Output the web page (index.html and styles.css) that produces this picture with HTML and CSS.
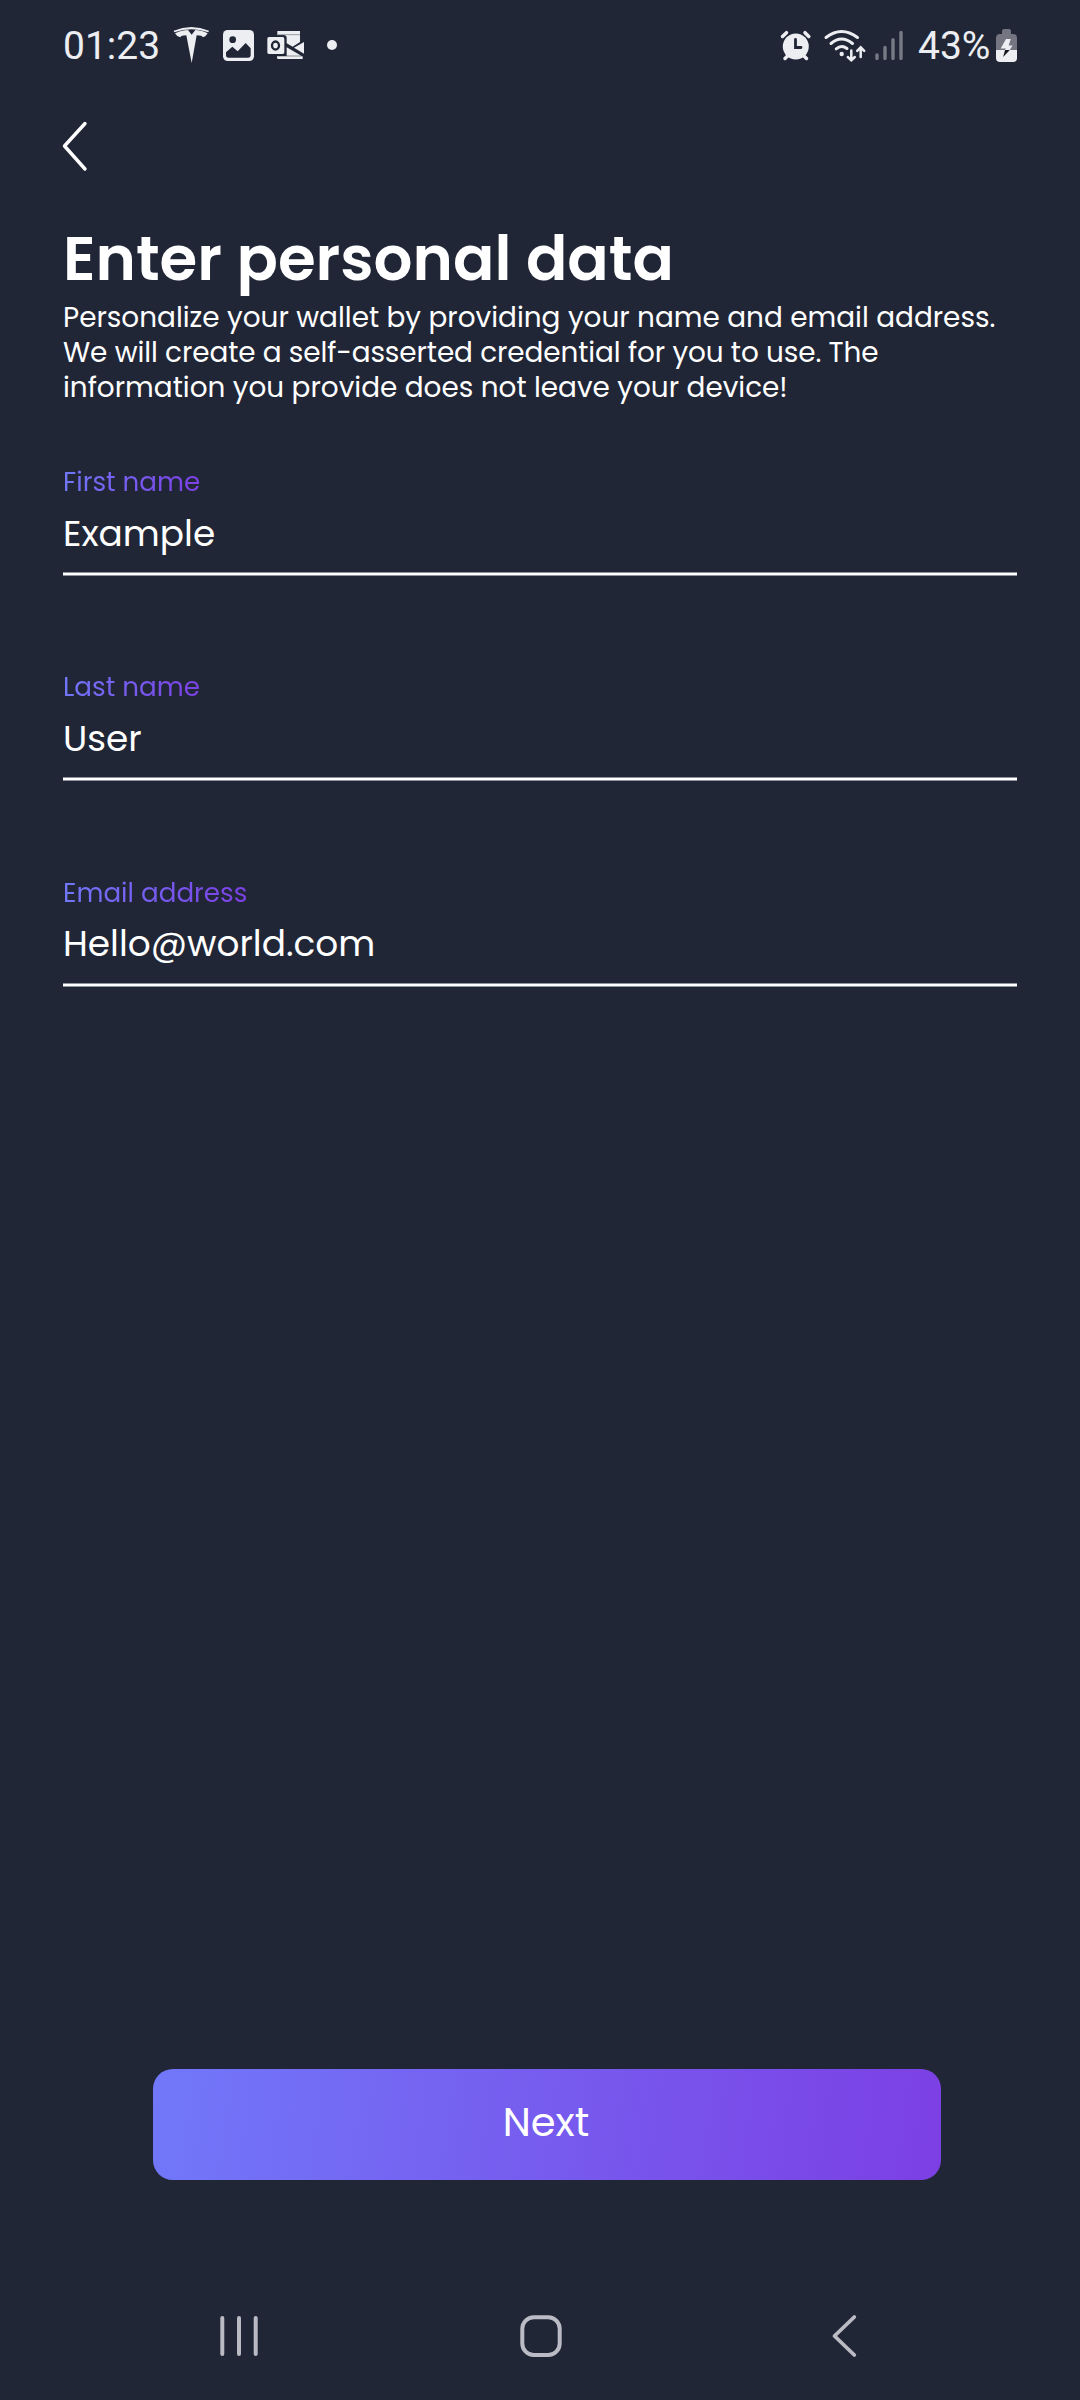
FILE: index.html
```html
<!DOCTYPE html>
<html lang="en">
<head>
<meta charset="utf-8">
<title>Enter personal data</title>
<link rel="stylesheet" href="styles.css">
</head>
<body>
<div class="screen">
  <header class="status">
    <span class="clock">01:23</span>
    <svg width="44" height="50" viewBox="0 0 132 150" fill="#eceef2">
      <path d="M11 32Q64 10 117 32L115 37Q64 19 13 37Z"/>
      <path d="M15 40Q38 30 54 30L65 44L76 30Q92 30 113 40Q108 50 99 52Q97 46 80 46L65 129L49 46Q32 46 31 52Q20 50 15 40Z"/>
    </svg>
    <svg width="48" height="50" viewBox="132 0 144 150" fill="#eceef2">
      <rect x="159" y="30" width="93" height="93" rx="14"/>
      <circle cx="188" cy="59" r="10" fill="#212637"/>
      <path d="M168 97L187 80L203 94L227 69L242 85V105Q242 113 234 113H176Q168 113 168 105Z" fill="#212637"/>
    </svg>
    <svg width="48" height="50" viewBox="276 0 144 150" fill="#eceef2">
      <path d="M322 33H390V66L368 80L350 70V54Q350 45 341 45H322Z"/>
      <path d="M322 44H390" stroke="#9a9ca8" stroke-width="3"/>
      <rect x="292" y="51" width="51" height="51" rx="5"/>
      <ellipse cx="316.500" cy="76.500" rx="10.500" ry="12" fill="none" stroke="#212637" stroke-width="7"/>
      <path d="M402 66V101L372 83ZM350 82L394 107H350ZM321 109H398V117H325Q321 117 321 113Z"/>
    </svg>
    <svg width="40" height="50" viewBox="420 0 120 150"><circle cx="486" cy="75" r="15" fill="#eceef2"/></svg>
    <div class="system">
      <svg width="45" height="50" viewBox="770 20 45 50" fill="none" stroke="#eceef2" stroke-width="3.500" stroke-linecap="round">
        <circle cx="795.800" cy="46.500" r="13" fill="#eceef2" stroke="none"/>
        <path d="M782.500 36.500L786.500 32.700M808.800 36.500L805 32.700M785 58.500L788 55.500M806.500 58.500L803.500 55.500"/>
        <path d="M795.500 39.500V47.500H801" stroke="#212637" stroke-width="2.800"/>
      </svg>
      <svg width="55" height="50" viewBox="815 20 55 50" fill="none" stroke="#eceef2" stroke-width="3" stroke-linecap="round">
        <path d="M826 37.500Q841.500 25.500 857.500 37.500M831 43.500Q841.500 34.500 852.500 43.500M836.200 48.800Q841.500 44.500 847 48.500"/>
        <circle cx="841.700" cy="54" r="2.200" fill="#eceef2" stroke="none"/>
        <path d="M851.300 50.500V60M847.800 57L851.300 60.300L854.800 57M860.700 57V47.500M857.200 50.800L860.700 47.300L864.200 50.800" stroke-width="2.500"/>
      </svg>
      <svg width="40" height="50" viewBox="870 20 40 50" stroke="#777985" stroke-width="3.400" stroke-linecap="round">
        <path d="M877 55V58.500M885 47.500V58.500M893 39.700V58.500M901 32.500V58.500"/>
      </svg>
      <span class="percent">43%</span>
      <svg width="27" height="50" viewBox="993 20 27 50">
        <path d="M1002 34V31Q1002 29 1004 29H1009Q1011 29 1011 31V34H1013Q1017 34 1017 38V50H996V38Q996 34 1000 34Z" fill="#747581"/>
        <path d="M996 50H1017V58Q1017 62 1013 62H1000Q996 62 996 58Z" fill="#eceef2"/>
        <path d="M1006 39H1010.800L1008.600 45.500H1012.500L1009.800 50H1005L1005.800 48.500H1000.700Z" fill="#eceef2"/>
        <path d="M1005 50H1009.800L1003.200 57Z" fill="#15171f"/>
      </svg>
    </div>
  </header>

  <svg class="back" width="30" height="54" viewBox="60 119 30 54" fill="none" stroke="#fff" stroke-width="3.400" stroke-linecap="round" stroke-linejoin="round">
    <path d="M85 123.500L64.500 146L85 169"/>
  </svg>

  <main class="content">
    <h1 class="title">Enter personal data</h1>
    <p class="intro">Personalize your wallet by providing your name and email address.<br><span class="tight">We will create a self-asserted credential for you to use. The</span><br>information you provide does not leave your device!</p>
    <div class="field"><span class="label">First name</span><div class="value">Example</div></div>
    <div class="field"><span class="label">Last name</span><div class="value">User</div></div>
    <div class="field"><span class="label">Email address</span><div class="value">Hello@world.com</div></div>
  </main>

  <button class="next">Next</button>

  <nav class="nav">
    <svg width="42" height="46" viewBox="218 2313 42 46" stroke="#babbc4" stroke-width="4" stroke-linecap="round"><path d="M222.300 2318V2354M239 2318V2354M255.700 2318V2354"/></svg>
    <svg width="46" height="46" viewBox="518 2313 46 46" fill="none" stroke="#babbc4" stroke-width="4"><rect x="522.300" y="2317.300" width="37.400" height="37.700" rx="11.500"/></svg>
    <svg width="30" height="46" viewBox="830 2313 30 46" fill="none" stroke="#babbc4" stroke-width="3.800" stroke-linecap="round" stroke-linejoin="round"><path d="M854.300 2317L834.500 2336L854.300 2355"/></svg>
  </nav>
</div>
</body>
</html>
```
FILE: styles.css
```css
* { box-sizing: border-box; }
body { margin: 0; background: #212637; }
.screen {
  width: 1080px;
  height: 2400px;
  display: flex;
  flex-direction: column;
  background: #212637;
  color: #fff;
  font-family: "Poppins", "Inter", sans-serif;
}
svg { display: block; flex: none; }
.status {
  display: flex;
  height: 70px;
  padding: 20px 60px 0 63px;
  font: 39px/52px "Roboto", sans-serif;
  color: #eceef2;
}
.clock { width: 107px; }
.system { display: flex; margin-left: auto; }
.percent { width: 83px; padding-left: 8px; }
.back { margin: 49px 0 0 60px; }
.content { padding: 48px 63px 0; }
.title {
  margin: 0;
  font-size: 61.1px;
  font-weight: 600;
  line-height: 75px;
}
.intro {
  margin: 3.600px 0 59px;
  font-size: 27.880px;
  line-height: 35px;
  white-space: nowrap;
}
.tight { letter-spacing: -0.090px; }
.field { height: 205.490px; }
.label {
  display: block;
  width: fit-content;
  font-size: 26.2px;
  line-height: 36px;
  background: linear-gradient(98deg, #7178f9, #7c3fe4);
  -webkit-background-clip: text;
  background-clip: text;
  color: transparent;
}
.value {
  height: 76.420px;
  padding-top: 6.910px;
  font-size: 35.900px;
  line-height: 54px;
  background: linear-gradient(#8f929b 1px, #fff 1px, #fff 3px, #8f929b 3px) bottom / 100% 4px no-repeat;
}
.next {
  width: 788px;
  height: 111px;
  margin: auto 0 0 153px;
  padding: 0 2px 5px 0;
  border: 0;
  border-radius: 20px;
  background: linear-gradient(98deg, #7178f9, #7c3fe4);
  color: #fff;
  font: 40px/60px "Poppins", "Inter", sans-serif;
}
.nav {
  display: grid;
  grid-template-columns: 300px 312px 30px;
  margin-top: 133px;
  padding: 0 0 41px 218px;
}
```
